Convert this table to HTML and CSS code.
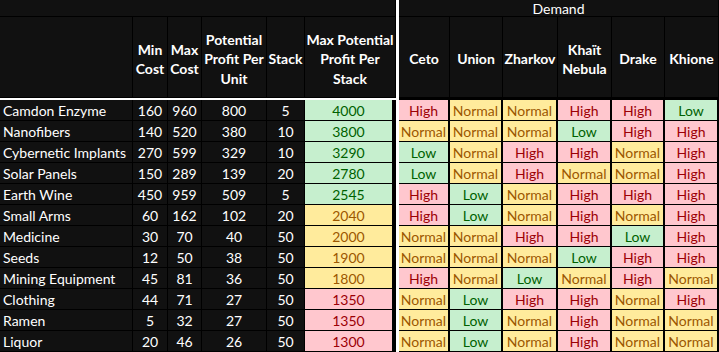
FILE: index.html
```html
<!DOCTYPE html>
<html lang="en">
<head>
<meta charset="utf-8">
<title>Trade goods</title>
<link rel="stylesheet" href="styles.css">
</head>
<body>
<div class="sheet">
  <div class="divider"></div>
  <div class="c blank"></div>
  <div class="c group">Demand</div>
  <div class="hline"></div>
  <div class="hline-dark"></div>

  <div class="c h"></div>
  <div class="c h">Min<br>Cost</div>
  <div class="c h">Max<br>Cost</div>
  <div class="c h">Potential<br>Profit Per<br>Unit</div>
  <div class="c h">Stack</div>
  <div class="c h">Max Potential<br>Profit Per<br>Stack</div>
  <div class="c h r">Ceto</div>
  <div class="c h r">Union</div>
  <div class="c h r">Zharkov</div>
  <div class="c h r">Khaït<br>Nebula</div>
  <div class="c h r">Drake</div>
  <div class="c h r">Khione</div>

  <div class="c name">Camdon Enzyme</div><div class="c">160</div><div class="c">960</div><div class="c">800</div><div class="c">5</div><div class="c total low">4000</div>
  <div class="c d high">High</div><div class="c d normal">Normal</div><div class="c d normal">Normal</div><div class="c d high">High</div><div class="c d high">High</div><div class="c d low">Low</div>

  <div class="c name">Nanofibers</div><div class="c">140</div><div class="c">520</div><div class="c">380</div><div class="c">10</div><div class="c total low">3800</div>
  <div class="c d normal">Normal</div><div class="c d normal">Normal</div><div class="c d normal">Normal</div><div class="c d low">Low</div><div class="c d high">High</div><div class="c d high">High</div>

  <div class="c name">Cybernetic Implants</div><div class="c">270</div><div class="c">599</div><div class="c">329</div><div class="c">10</div><div class="c total low">3290</div>
  <div class="c d low">Low</div><div class="c d normal">Normal</div><div class="c d high">High</div><div class="c d high">High</div><div class="c d normal">Normal</div><div class="c d high">High</div>

  <div class="c name">Solar Panels</div><div class="c">150</div><div class="c">289</div><div class="c">139</div><div class="c">20</div><div class="c total low">2780</div>
  <div class="c d low">Low</div><div class="c d normal">Normal</div><div class="c d high">High</div><div class="c d normal">Normal</div><div class="c d normal">Normal</div><div class="c d high">High</div>

  <div class="c name">Earth Wine</div><div class="c">450</div><div class="c">959</div><div class="c">509</div><div class="c">5</div><div class="c total low">2545</div>
  <div class="c d high">High</div><div class="c d low">Low</div><div class="c d normal">Normal</div><div class="c d high">High</div><div class="c d high">High</div><div class="c d high">High</div>

  <div class="c name">Small Arms</div><div class="c">60</div><div class="c">162</div><div class="c">102</div><div class="c">20</div><div class="c total normal">2040</div>
  <div class="c d high">High</div><div class="c d low">Low</div><div class="c d normal">Normal</div><div class="c d high">High</div><div class="c d normal">Normal</div><div class="c d high">High</div>

  <div class="c name">Medicine</div><div class="c">30</div><div class="c">70</div><div class="c">40</div><div class="c">50</div><div class="c total normal">2000</div>
  <div class="c d normal">Normal</div><div class="c d normal">Normal</div><div class="c d high">High</div><div class="c d high">High</div><div class="c d low">Low</div><div class="c d high">High</div>

  <div class="c name">Seeds</div><div class="c">12</div><div class="c">50</div><div class="c">38</div><div class="c">50</div><div class="c total normal">1900</div>
  <div class="c d normal">Normal</div><div class="c d normal">Normal</div><div class="c d normal">Normal</div><div class="c d low">Low</div><div class="c d high">High</div><div class="c d high">High</div>

  <div class="c name">Mining Equipment</div><div class="c">45</div><div class="c">81</div><div class="c">36</div><div class="c">50</div><div class="c total normal">1800</div>
  <div class="c d high">High</div><div class="c d normal">Normal</div><div class="c d low">Low</div><div class="c d normal">Normal</div><div class="c d high">High</div><div class="c d normal">Normal</div>

  <div class="c name">Clothing</div><div class="c">44</div><div class="c">71</div><div class="c">27</div><div class="c">50</div><div class="c total high">1350</div>
  <div class="c d normal">Normal</div><div class="c d low">Low</div><div class="c d high">High</div><div class="c d high">High</div><div class="c d normal">Normal</div><div class="c d high">High</div>

  <div class="c name">Ramen</div><div class="c">5</div><div class="c">32</div><div class="c">27</div><div class="c">50</div><div class="c total high">1350</div>
  <div class="c d normal">Normal</div><div class="c d low">Low</div><div class="c d normal">Normal</div><div class="c d high">High</div><div class="c d normal">Normal</div><div class="c d normal">Normal</div>

  <div class="c name">Liquor</div><div class="c">20</div><div class="c">46</div><div class="c">26</div><div class="c">50</div><div class="c total high">1300</div>
  <div class="c d normal">Normal</div><div class="c d low">Low</div><div class="c d normal">Normal</div><div class="c d high">High</div><div class="c d normal">Normal</div><div class="c d normal">Normal</div>
</div>
</body>
</html>
```

FILE: styles.css
```css
html, body {
  margin: 0;
  padding: 0;
  background: #000;
}

body {
  font-family: "Lato", "Open Sans", sans-serif;
  font-size: 14px;
  color: #fff;
}

.sheet {
  display: grid;
  grid-template-columns: 133px 35px 34px 65px 38px 91px 3px 51px 53px 55px 54px 53px 54px;
  grid-template-rows: 17px 81px 2px repeat(12, 21px);
  width: 719px;
  height: 352px;
  overflow: hidden;
  background: #000;
}

.divider {
  grid-column: 7;
  grid-row: 1 / -1;
  background: #fff;
}

.hline {
  grid-column: 1 / 7;
  grid-row: 3;
  background: #fff;
}

.hline-dark {
  grid-column: 8 / 14;
  grid-row: 3;
  background: #000;
}

.c {
  box-sizing: border-box;
  background: #111;
  border-right: 1px solid #000;
  border-bottom: 1px solid #000;
  display: flex;
  align-items: center;
  justify-content: center;
  text-align: center;
  white-space: nowrap;
  line-height: 18px;
  padding-top: 1px;
}

.blank {
  grid-column: 1 / 7;
  grid-row: 1;
}

.group {
  grid-column: 8 / 14;
  grid-row: 1;
  line-height: 16px;
}

.h {
  font-weight: 700;
  line-height: 19.5px;
  padding-top: 4px;
}

.name {
  justify-content: flex-start;
  padding-left: 3px;
}

.total {
  border-right-width: 4px;
}

.d {
  border-right-width: 2px;
}

.high {
  background: #ffc7ce;
  color: #9c0006;
}

.normal {
  background: #ffeb9c;
  color: #9c5700;
}

.low {
  background: #c6efce;
  color: #006100;
}
```
